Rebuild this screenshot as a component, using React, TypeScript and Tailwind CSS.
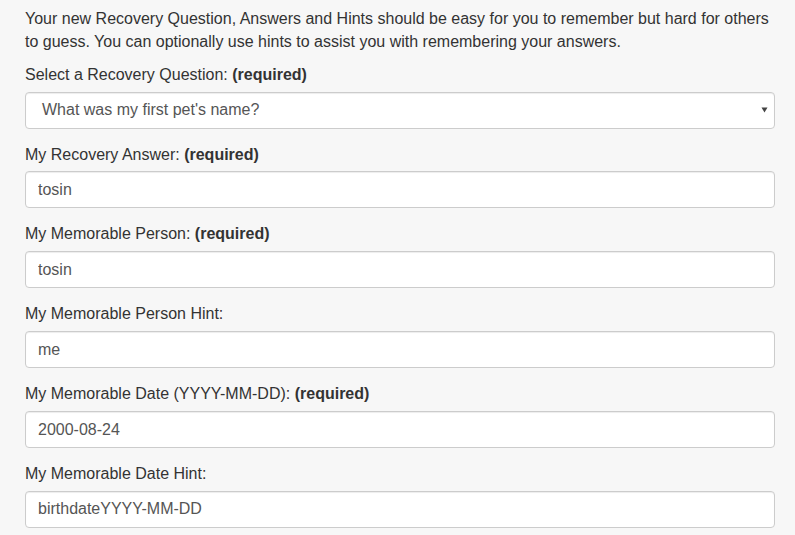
import React from "react";

const font = { fontFamily: '"Liberation Sans", Arial, sans-serif' };

function Field({ label, required, value }: { label: string; required?: boolean; value: string }) {
  return (
    <div className="mb-[15px]">
      <label className="block mb-[5px] text-[16px] leading-[22.86px] text-[#333]">
        {label}
        {required && <b className="font-bold"> (required)</b>}
      </label>
      <input
        readOnly
        defaultValue={value}
        className="block w-full h-[37px] px-[12px] py-[6px] text-[16px] leading-[22.86px] text-[#555] bg-white border border-[#ccc] rounded-[4px] shadow-[inset_0_1px_1px_rgba(0,0,0,0.075)] outline-none"
        style={font}
      />
    </div>
  );
}

export default function App() {
  return (
    <div className="min-h-[535px] bg-[#f7f7f7] pl-[25px] pr-[20px] pt-[8px] text-[#333]" style={font}>
      <p className="mb-[10px] text-[16px] leading-[22.86px]">
        Your new Recovery Question, Answers and Hints should be easy for you to remember but hard for others to guess. You can optionally use hints to assist you with remembering your answers.
      </p>
      <div className="mb-[15px]">
        <label className="block mb-[5px] text-[16px] leading-[22.86px]">
          Select a Recovery Question:<b className="font-bold"> (required)</b>
        </label>
        <div className="flex items-center justify-between h-[37px] pl-[16px] pr-[6px] text-[16px] text-[#555] bg-white border border-[#ccc] rounded-[4px] shadow-[inset_0_1px_1px_rgba(0,0,0,0.075)]">
          <span>What was my first pet's name?</span>
          <svg width="7" height="6" viewBox="0 0 7 6">
            <path d="M0.5 0.5 L6.5 0.5 L3.5 5.5 Z" fill="#444" />
          </svg>
        </div>
      </div>
      <Field label="My Recovery Answer:" required value="tosin" />
      <Field label="My Memorable Person:" required value="tosin" />
      <Field label="My Memorable Person Hint:" value="me" />
      <Field label="My Memorable Date (YYYY-MM-DD):" required value="2000-08-24" />
      <Field label="My Memorable Date Hint:" value="birthdateYYYY-MM-DD" />
    </div>
  );
}
